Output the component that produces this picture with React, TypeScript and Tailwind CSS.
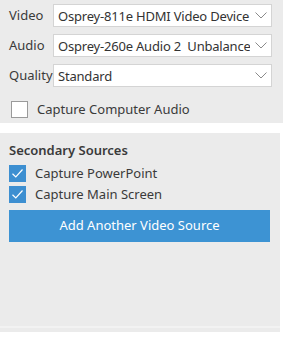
const SOURCES = [
  { label: 'Video', value: 'Osprey-811e HDMI Video Device', clip: false },
  { label: 'Audio', value: 'Osprey-260e Audio 2  Unbalanced', clip: true },
  { label: 'Quality', value: 'Standard', clip: false },
];

const SECONDARY = ['Capture PowerPoint', 'Capture Main Screen'];

function Chevron() {
  return (
    <svg width="12" height="7" viewBox="0 0 12 7" fill="none" className="shrink-0">
      <path d="M0.5 0.5 L6 6 L11.5 0.5" stroke="#8a8a8a" strokeWidth="1" />
    </svg>
  );
}

function Check() {
  return (
    <div className="w-[17px] h-[17px] bg-[#3d8fd1] flex items-center justify-center shrink-0">
      <svg width="13" height="11" viewBox="0 0 13 11" fill="none">
        <path d="M1.5 5.8 L4.8 9 L11.5 1.5" stroke="#fff" strokeWidth="1.2" />
      </svg>
    </div>
  );
}

export default function App() {
  return (
    <div
      className="w-[283px] h-[337px] bg-white text-[13px] text-[#3a3a3a] overflow-hidden"
      style={{ fontFamily: '"Noto Sans", "Open Sans", sans-serif' }}
    >
      {/* primary sources */}
      <div className="bg-[#ebebeb] h-[123px] pt-[4px] pl-[9px] pr-[11px]">
        <div className="flex flex-col gap-[7px]">
          {SOURCES.map(({ label, value, clip }) => (
            <div key={label} className="flex items-center h-[23px]">
              <span className="w-[44px] shrink-0 leading-none">{label}</span>
              <div className="flex-1 h-[23px] bg-white border border-[#d4d4d4] flex items-center pl-[4px] pr-[4px] min-w-0">
                <span
                  className={
                    clip
                      ? 'flex-1 min-w-0 mr-[5px] overflow-hidden whitespace-pre leading-[16px] text-[#333] tracking-[-0.2px]'
                      : 'flex-1 whitespace-pre leading-[16px] text-[#333] tracking-[-0.2px]'
                  }
                >
                  {value}
                </span>
                <Chevron />
              </div>
            </div>
          ))}
        </div>
        <div className="flex items-center mt-[14px] ml-[2px]">
          <div className="w-[17px] h-[17px] bg-white border border-[#9a9a9a]" />
          <span className="ml-[9px] leading-none">Capture Computer Audio</span>
        </div>
      </div>

      <div className="h-[10px]" />

      {/* secondary sources */}
      <div className="w-[280px] h-[195px] bg-[#ebebeb] px-[9px] pt-[9px] border-b-[2px] border-[#f2f2f2]">
        <div className="font-semibold leading-[17px]">Secondary Sources</div>
        <div className="flex flex-col gap-[4px] mt-[6px]">
          {SECONDARY.map((s) => (
            <div key={s} className="flex items-center">
              <Check />
              <span className="ml-[9px] leading-none">{s}</span>
            </div>
          ))}
        </div>
        <button className="mt-[7px] w-[261px] h-[32px] bg-[#3d93d3] text-white text-[13px] flex items-center justify-center">
          Add Another Video Source
        </button>
      </div>
      <div className="w-[280px] h-[4px] bg-[#ebebeb]" />
    </div>
  );
}
